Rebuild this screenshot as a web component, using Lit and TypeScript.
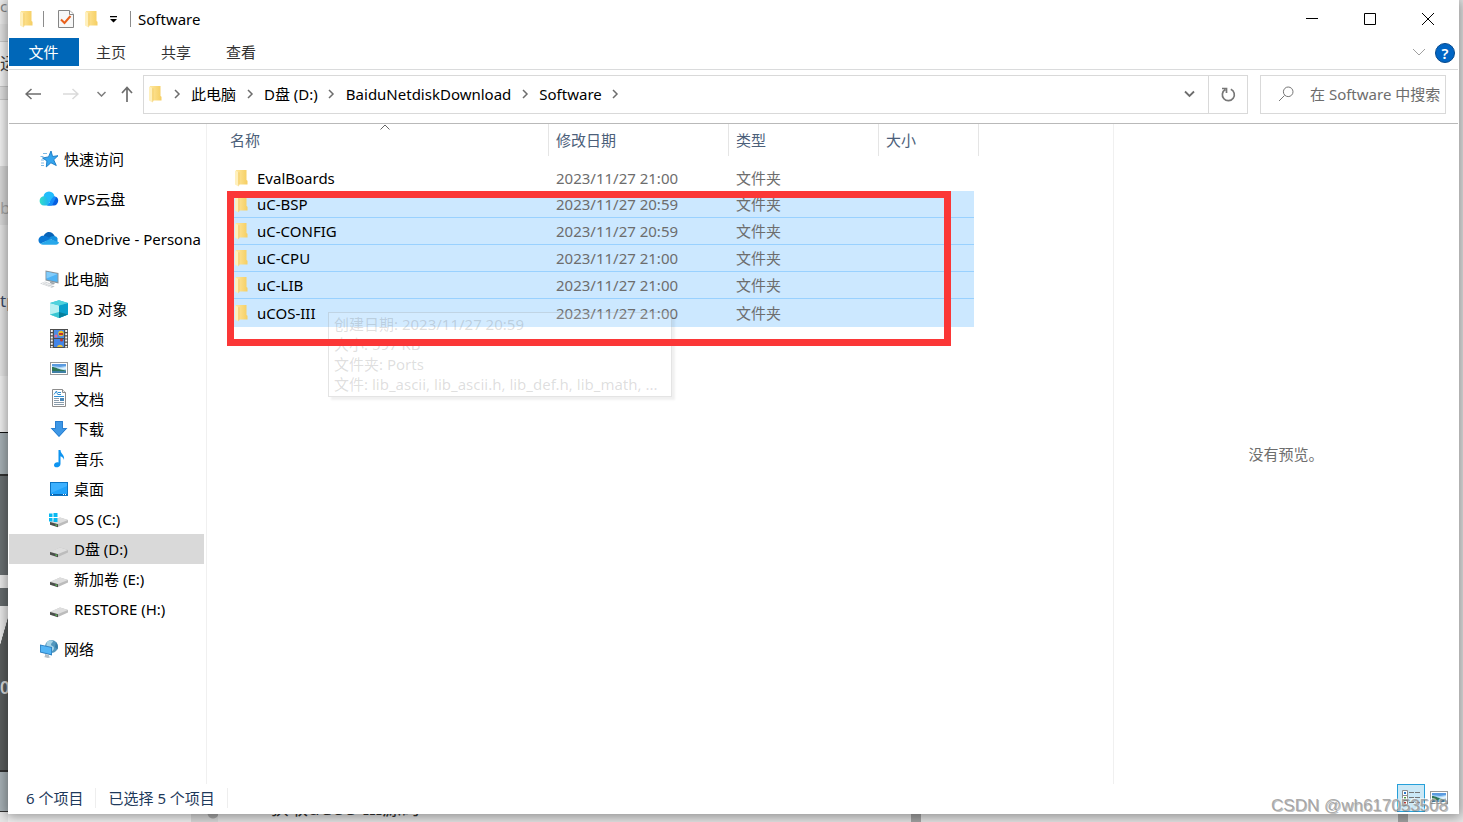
import { LitElement, html, css, svg, nothing, TemplateResult } from "lit";
import { customElement } from "lit/decorators.js";
import { classMap } from "lit/directives/class-map.js";

const folder = html`<svg class="folder" width="14" height="18" viewBox="0 0 14 18" aria-hidden="true">
  <defs><linearGradient id="f" x1="0" y1="0" x2="1" y2="0"><stop offset="0" stop-color="#ffe79d"/><stop offset="1" stop-color="#f5ce62"/></linearGradient></defs>
  <path d="M1 1h10.500v10l1 .8V15.500H1z" fill="url(#f)"/>
  <path d="M0 1.500l3.500 1.500v14.500L0 15.500z" fill="#fff0bd"/>
  <path d="M3.500 3v14.500l.8-1.500V3.500z" fill="#efc558"/>
</svg>`;

const icon = (body: unknown) =>
  html`<svg class="icon" width="20" height="20" viewBox="0 0 20 20" aria-hidden="true">${body}</svg>`;

const picture = svg`<rect x="1.500" y="3.500" width="17" height="12" fill="#fff" stroke="#9a9a9a"/>
  <rect x="3" y="5" width="14" height="9" fill="#a9d4f7"/><path d="M3 5h14v2l-6 1-8-1z" fill="#5b9be0"/>
  <path d="M9 10l8-2v2l-6 1z" fill="#e2f3fb"/>
  <path d="M3 8c4 0 6 2.500 14 3.500v1H3z" fill="#2f7657"/><path d="M3 12h14v2H3z" fill="#3e7fa5"/>`;

const driveBody = svg`<path d="M1 13l10-4.500 8 2.500v2.500L9 18l-8-2.500z" fill="#bcbcbc"/>
  <path d="M1 12.800l10-4.300 8 2.500-10 4z" fill="#dedede"/>
  <path d="M1 13l8 2.200V18.200L1 15.800z" fill="#4b4f4b"/><path d="M6.500 15.300l1.400.4v1.200l-1.400-.4z" fill="#5ddd55"/>`;

const icons: Record<string, unknown> = {
  star: svg`<path d="M12 2l1.600 5.500 5.400-.8-4.300 4.100 2.600 5.700-5.400-2.700-4.600 4.100.6-6L3.500 9l6-1.100z" fill="#35a5ee" stroke="#1578c4" stroke-width=".9"/>
    <path d="M4 4.500h4M1.500 7.500h3M2 11h3M2 14h3M2 16.500h3" stroke="#6fb2e2" stroke-width=".9"/>`,
  wps: svg`<defs><linearGradient id="w" x1="0" x2="1"><stop offset="0" stop-color="#34dfc8"/><stop offset="1" stop-color="#1ba9ff"/></linearGradient></defs>
    <circle cx="10" cy="8" r="5.500" fill="#22bdfc"/><path d="M9 16.500l6-9c3-.5 4.500 2 4.200 4.500-.3 2.700-2 4.500-4.200 4.500z" fill="#075fe0"/>
    <path d="M5.500 7.300C2.500 7.300.6 9.300.6 11.900S2.500 16.500 5 16.500h7c-2.500-1-3-9.200-6.500-9.200z" fill="url(#w)"/><path d="M8 16.300c3-.6 3-6.500 7-8.800l2 1-4 8H8z" fill="#168dfa"/>`,
  onedrive: svg`<path d="M4 9.500C5 2 12.500.5 16 7.500L9 12z" fill="#0864b8"/><path d="M4.500 6.700C2 6.500-.5 8.500-.5 11.200c0 1.400.8 2.700 1.800 3.600L12 10C9 7.500 7 6.700 4.500 6.700z" fill="#0a78d4"/>
    <path d="M10 9.200c2-2.400 7-3.500 8.500.3L18.500 14z" fill="#1490df"/><path d="M1.300 14.800L11 10l9 3.300c-.3 1.600-1.500 2.400-3 2.400H4c-1 0-2-.3-2.700-.9z" fill="#28a8ea"/>`,
  pc: svg`<path d="M6.500 1.500L19.500 4v10.500L6.500 11.500z" fill="#8a949b"/><path d="M7.500 2.700l11 2.200v8.200l-11-2.500z" fill="#4fb3f5"/><path d="M7.500 2.700l11 2.200-11 4.500z" fill="#82ccfa"/>
    <path d="M11 12.500l5 1.300-1 1.700-4-1z" fill="#9fa8ad"/><path d="M1 14.500l5-2 9 3-5 2.200z" fill="#d2d5d8"/><path d="M3 14.600l3.500-1.200M5.500 15.400l4-1.400M8 16.200l4-1.300" stroke="#fff" stroke-width=".7"/><path d="M11 18l3-1.200 1.700.7-3 1.200z" fill="#c0c4c8"/>`,
  cube: svg`<path d="M1 4l9-2.700L19 4v11.500L10 19l-9-3.500z" fill="#29b9d6"/><path d="M1 4l9 2.500V19l-9-3.500z" fill="#b8f0f2"/><path d="M10 6.500L19 4v11.500L10 19z" fill="#0ba0cc"/>
    <path d="M1 4l9-2.700L19 4l-9 2.500z" fill="#4fd2dc"/><path d="M1 15.500l9-2.500v6z" fill="#39c6d2"/><path d="M10 13l9 2.500L10 19z" fill="#067f9c"/>`,
  video: svg`<rect x="1" y="0" width="18" height="19" fill="#4c4c4c"/><rect x="5" y="1" width="10" height="8" fill="#4d8de4"/><rect x="5" y="10" width="10" height="8" fill="#4385e8"/>
    <path d="M2.800 1v17.500M17.200 1v17.500" stroke="#f2f2f2" stroke-width="2" stroke-dasharray="2 1.200"/>
    <circle cx="12" cy="4.500" r="2.700" fill="#edc427"/><path d="M10 4h4v2h-4z" fill="#c53427"/><circle cx="7" cy="7" r="1.500" fill="#e06a9a"/><circle cx="12.500" cy="11" r="1.500" fill="#b93730"/><path d="M8 18c1-3 5-3 6 0z" fill="#e8c23a"/>`,
  picture,
  doc: svg`<path d="M3.500.500h10l3 3v14h-13z" fill="#fff" stroke="#8d8d8d"/><path d="M13.500.5v3h3" fill="#eee" stroke="#8d8d8d"/>
    <path d="M5 5.500L7.500 2l1 3.500M9 3.500h3M9 5.500h3M5 7.500h10" stroke="#2f8fd3" fill="none"/><path d="M5 9.500h5M5 11.500h5M5 13.500h10M5 15.500h10" stroke="#8a9cab"/><rect x="11" y="9" width="4" height="3" fill="#4a87b8"/>`,
  download: svg`<path d="M6 2h8v7h4.500L10 18 1.500 9H6z" fill="#3d97e6"/><path d="M6.500 2.500h7v7h3.800L10 17.300 2.700 9.500h3.800z" fill="none" stroke="#2a7fd0"/>`,
  music: svg`<path d="M9.500 1h2c0 4 4.500 4.500 3.500 10-.5-2.300-2-3.500-3.500-3.800V15c0 3.800-6.500 4.600-6.500 1.300 0-2.400 2.500-3.400 4.500-2.800z" fill="#0e94f0"/>`,
  desktop: svg`<rect x="1.500" y="3.500" width="17" height="13" fill="#22a3fb" stroke="#0b74c4"/><path d="M2 4h16v3L2 14z" fill="#3db1ff"/><path d="M2 15.500h16" stroke="#0b66b0"/><path d="M3 15.500h1M14 15.500h1M16 15.500h1" stroke="#fff"/>`,
  os: svg`${driveBody}<path d="M0 4.500h3.500v3.500H0zM4.500 4h4v4h-4zM0 9h3.500v3.500H0zM4.500 9h4v4h-4z" fill="#08b9f1"/>`,
  drive: driveBody,
  network: svg`<circle cx="12.500" cy="7.500" r="6.500" fill="#5297bd"/><path d="M8 3c2-2 5-2 6-1 0 2-2 1.500-2 3.500s3 1 3 3.500-2 3-3 4c-3-3-6-5-4-10z" fill="#a6d3e6"/><path d="M17 3c1.500 2 2.500 5 1.500 7.500L16 8z" fill="#357da8"/>
    <path d="M1 5.500l12 2.500v8.500L1 13.500z" fill="#2c7fc0"/><path d="M1.800 6.500l10.400 2.200v6.500L1.800 12.700z" fill="#52b5f6"/><path d="M6 15l4 1v1.500l2 .6-3 .9-4-1 1-.8z" fill="#b4bec5"/>`,
};

interface Node { icon: string; label: string; child?: boolean; selected?: boolean; }

const tree: Node[][] = [
  [{ icon: "star", label: "快速访问" }],
  [{ icon: "wps", label: "WPS云盘" }],
  [{ icon: "onedrive", label: "OneDrive - Persona" }],
  [
    { icon: "pc", label: "此电脑" },
    { icon: "cube", label: "3D 对象", child: true },
    { icon: "video", label: "视频", child: true },
    { icon: "picture", label: "图片", child: true },
    { icon: "doc", label: "文档", child: true },
    { icon: "download", label: "下载", child: true },
    { icon: "music", label: "音乐", child: true },
    { icon: "desktop", label: "桌面", child: true },
    { icon: "os", label: "OS (C:)", child: true },
    { icon: "drive", label: "D盘 (D:)", child: true, selected: true },
    { icon: "drive", label: "新加卷 (E:)", child: true },
    { icon: "drive", label: "RESTORE (H:)", child: true },
  ],
  [{ icon: "network", label: "网络" }],
];

const files = [
  { name: "EvalBoards", date: "2023/11/27 21:00", selected: false },
  { name: "uC-BSP", date: "2023/11/27 20:59", selected: true },
  { name: "uC-CONFIG", date: "2023/11/27 20:59", selected: true },
  { name: "uC-CPU", date: "2023/11/27 21:00", selected: true },
  { name: "uC-LIB", date: "2023/11/27 21:00", selected: true },
  { name: "uCOS-III", date: "2023/11/27 21:00", selected: true },
];

const line = (w: number, h: number, d: string, color: string, width = 1): TemplateResult =>
  html`<svg width=${w} height=${h} viewBox="0 0 ${w} ${h}" fill="none" stroke=${color} stroke-width=${width} aria-hidden="true"><path d=${d}/></svg>`;

const crumbArrow = html`<span class="crumb-arrow">${line(7, 10, "M1 1l4 4-4 4", "#6d6d6d", 1.5)}</span>`;

@customElement("app-root")
export class AppRoot extends LitElement {
  static styles = css`
    :host { display: block; position: relative; height: 100vh; overflow: hidden; background: #e9e9e9;
      font: 15px/20px "Noto Sans", "Noto Sans CJK SC", sans-serif; color: #000; }
    * { box-sizing: border-box; }
    button { font: inherit; color: inherit; border: 0; background: none; padding: 0; display: flex; align-items: center; justify-content: center; }
    a { color: inherit; text-decoration: none; }
    svg { display: block; flex: none; }

    .behind { position: absolute; inset: 0; display: flex; }
    .strip { width: 8px; display: flex; flex-direction: column; overflow: hidden; flex: none; font-size: 17px; color: #444; }
    .strip div { flex: none; overflow: hidden; white-space: nowrap; }
    .s1 { height: 24px; background: #efefef; color: #888; font-size: 15px; line-height: 12px; }
    .s2 { height: 17px; background: #e6e6e6; }
    .s3 { height: 46px; background: #f6f6f6; border-top: 1px solid #ccc; border-bottom: 1px solid #ccc; line-height: 44px; }
    .s4 { height: 13px; background: #e4e4e4; border-bottom: 1px solid #ccc; }
    .s5 { height: 66px; background: #f7f7f7; }
    .s6 { height: 59px; background: #ddd; color: #aaa; line-height: 84px; }
    .s7 { height: 151px; background: #e9e9e9; color: #3c4a66; line-height: 151px; }
    .s8 { height: 56px; background: #f4f4f4; }
    .s9 { height: 44px; background: #aab4b9; border-top: 1px solid #111; border-bottom: 2px solid #333; }
    .s10 { height: 99px; background: #6c7274; }
    .s11 { height: 13px; background: #eee; }
    .s12 { height: 18px; background: #686e70; }
    .s13 { height: 164px; background: linear-gradient(106deg, #eee 0 20%, #5b5e5e 21%); color: #ddd; font-weight: 600; line-height: 24px; padding-top: 70px; white-space: pre-line; }
    .s14 { height: 42px; background: #aab4b9; border-top: 2px solid #333; border-bottom: 1px solid #333; }
    .s15 { flex: 1; background: #f4f4f4; }
    .page { flex: 1; display: flex; align-items: flex-end; }
    .gutter { width: 183px; height: 8px; background: #f6f6f6; }
    .rail { width: 27px; height: 8px; background: radial-gradient(circle at 22px -1px, #aaa 5px, #dedede 6px); }
    .under-text { width: 693px; height: 28px; padding-left: 52px; font-size: 19px; line-height: 28px; color: #333; }
    .bar { width: 10px; height: 8px; background: #a6a6a6; }
    .space { width: 477px; }

    .window { position: relative; height: calc(100% - 8px); margin: 0 4px 0 8px; background: #fff;
      box-shadow: 0 1px 12px 2px rgba(0,0,0,.4); display: flex; flex-direction: column; padding: 0 1px; }

    .title { height: 38px; display: flex; align-items: center; padding: 0 1px 0 11px; flex: none; }
    .sep { width: 1px; height: 16px; background: #8c8c8c; flex: none; }
    .title .sep { margin-left: 9px; }
    .check { margin-left: 14px; }
    .quick { margin: 0 11px; }
    .title .sep.last { margin-left: 13px; }
    .title h1 { font: inherit; margin: 0 auto 0 7px; }
    .controls { display: flex; }
    .controls button { width: 58px; height: 37px; }

    .tabs { height: 32px; display: flex; align-items: flex-start; border-bottom: 1px solid #dadbdc; flex: none; color: #333; }
    .tabs button { width: 65px; height: 28px; padding: 0 1px 0 0; }
    .tabs .file { width: 70px; background: #0067b8; color: #fff; }
    .tabs .grow { flex: 1; }
    .tabs .expand { width: 32px; }
    .tabs .help { width: 20px; height: 20px; margin: 5px 3px 0 0; padding: 0; line-height: 20px; border-radius: 50%; background: #0065c4; border: 1px solid #06498c; color: #fff; font-weight: 600; }

    .address { height: 54px; display: flex; align-items: center; padding: 0 12px 5px 12px; border-bottom: 1px solid #b9b9b9; flex: none; }
    .nav { display: flex; align-items: center; width: 122px; flex: none; }
    .nav button { height: 30px; width: 24px; }
    .nav .fwd { margin-left: 14px; }
    .nav .recent { margin-left: 6px; }
    .nav .up { margin-left: 2px; }
    .path { flex: 1; min-width: 0; height: 39px; border: 1px solid #d9d9d9; display: flex; align-items: center; padding-left: 5px; }
    .path a { white-space: nowrap; }
    .crumb-arrow { width: 28px; display: flex; justify-content: center; flex: none; }
    .path .grow { flex: 1; }
    .path button { width: 38px; height: 37px; }
    .path .reload { border-left: 1px solid #d9d9d9; width: 39px; }
    .search { width: 186px; height: 39px; margin-left: 12px; border: 1px solid #d9d9d9; display: flex; align-items: center; padding-left: 17px; gap: 16px; flex: none; }
    .search input { flex: 1; min-width: 0; border: 0; padding: 0; font: inherit; background: none; outline: 0; }
    .search input::placeholder { color: #6d6d6d; opacity: 1; }

    .body { flex: 1; display: flex; min-height: 0; }
    .side { width: 198px; border-right: 1px solid #f0f0f0; padding: 20px 2px 0 0; display: flex; flex-direction: column; gap: 10px; flex: none; }
    .side a { display: flex; align-items: center; height: 30px; padding-left: 30px; gap: 5px; white-space: nowrap; }
    .side a.child { padding-left: 40px; }
    .side a.selected { background: #d9d9d9; }
    .icon { overflow: visible; }
    .list { flex: 1; position: relative; padding-left: 21px; min-width: 0; }
    .preview { width: 345px; border-left: 1px solid #f0f0f0; display: flex; align-items: center; justify-content: center; color: #6d6d6d; flex: none; }

    table { border-collapse: separate; border-spacing: 0; table-layout: fixed; width: 751px; }
    .c-name { width: 321px; } .c-date { width: 180px; } .c-type { width: 150px; } .c-size { width: 95px; } .c-end { width: 5px; }
    th { height: 32px; padding: 0 0 0 7px; border-right: 1px solid #e5e5e5; font-weight: 400; text-align: left; color: #4c607a; }
    th:first-child { padding-left: 2px; position: relative; }
    .sort { position: absolute; left: 152px; top: 0; }
    .gap td { height: 8px; padding: 0; }
    td { height: 27px; padding: 0 0 0 7px; color: #6d6d6d; }
    td:first-child { color: #000; }
    .picked td:not(.end) { background: #cce8ff; border-bottom: 1px solid #99d1ff; }
    .picked:last-child td:not(.end) { height: 28px; border-bottom: 1px solid #cce8ff; }
    .name { display: flex; align-items: center; gap: 8px; height: 26px; }
    td.end { padding: 0; }

    .tip { position: absolute; left: 121px; top: 188px; width: 344px; height: 85px; padding: 1px 5px; border: 1px solid rgba(118,118,118,.2); background: rgba(255,255,255,.15); box-shadow: 3px 3px 2px rgba(0,0,0,.06); color: rgba(87,87,87,.2); white-space: nowrap; }
    .mark { position: absolute; left: 20px; top: 67px; width: 724px; height: 155px; border: 7px solid #fb3737; pointer-events: none; }

    .status { height: 30px; display: flex; align-items: center; padding: 0 9px 2px 17px; color: #1e395b; flex: none; }
    .status .cell { padding-right: 12px; margin-right: 12px; border-right: 1px solid #eee; }
    .status .grow { flex: 1; }
    .status button { width: 28px; height: 28px; }
    .status .on { background: #cbe8f6; border: 1px solid #26a0da; }
    .status .thumb { width: 20px; margin-left: 4px; }
    .credit { position: absolute; right: 15px; bottom: 6px; font: 17px/20px "Liberation Sans", sans-serif; color: rgba(160,160,160,.9); text-shadow: 1px 1px 0 rgba(90,90,90,.4), -1px -1px 0 rgba(255,255,255,.6); }
  `;

  private renderNode(n: Node) {
    return html`<a href="#" class=${classMap({ child: !!n.child, selected: !!n.selected })}>${icon(icons[n.icon])}<span>${n.label}</span></a>`;
  }

  private renderFile(f: (typeof files)[number]) {
    return html`<tr class=${classMap({ picked: f.selected })}>
      <td><div class="name">${folder}<span>${f.name}</span></div></td>
      <td>${f.date}</td><td>文件夹</td><td></td><td class="end"></td>
    </tr>`;
  }

  render() {
    const strip = ["c", "", "运", "", "", "b", "tp", "", "", "", "", "", "0\nP", "", ""];
    return html`
      <div class="behind" aria-hidden="true">
        <div class="strip">${strip.map((t, i) => html`<div class="s${i + 1}">${t || nothing}</div>`)}</div>
        <div class="page">
          <div class="gutter"></div><div class="rail"></div>
          <div class="under-text">获取uCOS-III源码</div>
          <div class="bar"></div><div class="space"></div><div class="bar"></div>
        </div>
      </div>
      <div class="window">
        <header class="title">
          ${folder}<span class="sep"></span>
          <svg class="check" width="16" height="18" viewBox="0 0 16 18" aria-hidden="true">
            <path d="M.5.500h11l4 3.500v13.500H.5z" fill="#f7f7f7" stroke="#858585"/><path d="M11.500.5v4h4" fill="#fff" stroke="#858585"/>
            <path d="M3 9.500l3.500 3.500L12.500 6" fill="none" stroke="#e8601c" stroke-width="2"/>
          </svg>
          <span class="quick">${folder}</span>
          <svg width="7" height="7" viewBox="0 0 7 7" aria-hidden="true"><path d="M0 0h7v1.300H0zM0 3h7L3.500 6.500z"/></svg>
          <span class="sep last"></span>
          <h1>Software</h1>
          <div class="controls">
            <button aria-label="最小化">${line(12, 12, "M0 5.5h12", "#000")}</button>
            <button aria-label="最大化">${line(12, 12, "M.5.5h11v11H.5z", "#000")}</button>
            <button aria-label="关闭">${line(12, 12, "M0 0l12 12M12 0L0 12", "#000")}</button>
          </div>
        </header>
        <div class="tabs">
          <button class="file">文件</button><button>主页</button><button>共享</button><button>查看</button>
          <span class="grow"></span>
          <button class="expand" aria-label="展开功能区">${line(12, 8, "M0 1l6 6 6-6", "#a0a0a0")}</button>
          <button class="help" aria-label="帮助">?</button>
        </div>
        <div class="address">
          <div class="nav">
            <button aria-label="后退">${line(16, 12, "M6.500 1L1 6l5.500 5M1 6h15", "#6d6d6d", 1.5)}</button>
            <button class="fwd" aria-label="前进">${line(16, 12, "M9.500 1L15 6l-5.500 5M15 6H0", "#dadada", 1.5)}</button>
            <button class="recent" aria-label="最近位置">${line(9, 6, "M.5 1l4 4 4-4", "#7d7d7d", 1.5)}</button>
            <button class="up" aria-label="上移">${line(12, 16, "M1 7l5-5.500L11 7M6 1.500V16", "#6d6d6d", 1.7)}</button>
          </div>
          <nav class="path" aria-label="地址">
            ${folder}${crumbArrow}<a href="#">此电脑</a>${crumbArrow}<a href="#">D盘 (D:)</a>${crumbArrow}<a href="#">BaiduNetdiskDownload</a>${crumbArrow}<a href="#">Software</a>${crumbArrow}
            <span class="grow"></span>
            <button aria-label="历史">${line(11, 8, "M1 1.500l4.500 4.500L10 1.500", "#6d6d6d", 1.8)}</button>
            <button class="reload" aria-label="刷新">${line(15, 15, "M9.800 2.200A6 6 0 1 1 4.300 2.500M5.500 6V1.500H1", "#777", 1.7)}</button>
          </nav>
          <div class="search">
            ${line(16, 16, "M6.500 9.500L1 15M15 5.800A4.800 4.800 0 1 1 5.400 5.800A4.800 4.800 0 1 1 15 5.800", "#777")}
            <input type="text" aria-label="搜索" placeholder="在 Software 中搜索">
          </div>
        </div>
        <div class="body">
          <nav class="side" aria-label="导航">${tree.map((g) => html`<div>${g.map((n) => this.renderNode(n))}</div>`)}</nav>
          <main class="list">
            <table>
              <colgroup><col class="c-name"><col class="c-date"><col class="c-type"><col class="c-size"><col class="c-end"></colgroup>
              <thead><tr>
                <th>名称<span class="sort">${line(10, 6, "M.5 5.500L5 1l4.500 4.500", "#666")}</span></th>
                <th>修改日期</th><th>类型</th><th colspan="2">大小</th>
              </tr></thead>
              <tbody><tr class="gap"><td colspan="5"></td></tr>${files.map((f) => this.renderFile(f))}</tbody>
            </table>
            <div class="tip" role="tooltip">
              <div>创建日期: 2023/11/27 20:59</div><div>大小: 597 KB</div><div>文件夹: Ports</div>
              <div>文件: lib_ascii, lib_ascii.h, lib_def.h, lib_math, ...</div>
            </div>
            <div class="mark"></div>
          </main>
          <aside class="preview">没有预览。</aside>
        </div>
        <footer class="status">
          <span class="cell">6 个项目</span><span class="cell">已选择 5 个项目</span><span class="grow"></span>
          <button class="on" aria-label="详细信息">
            <svg width="18" height="17" viewBox="0 0 18 17" aria-hidden="true">
              <path d="M.5.500h5v5h-5zM.5 5.500h5v5h-5zM.5 10.500h5v5h-5z" fill="#fff" stroke="#8c8c8c"/>
              <path d="M2 3h2" stroke="#2a78c8" stroke-width="2"/><path d="M2 8h2" stroke="#4c9c3c" stroke-width="2"/><path d="M2 13h2" stroke="#c8322a" stroke-width="2"/>
              <path d="M7 2.500h5M13 2.500h5M7 7.500h5M13 7.500h5M7 12.500h5M13 12.500h5" stroke="#777"/>
            </svg>
          </button>
          <button class="thumb" aria-label="大缩略图">${icon(picture)}</button>
        </footer>
      </div>
      <div class="credit">CSDN @wh617053508</div>
    `;
  }
}
